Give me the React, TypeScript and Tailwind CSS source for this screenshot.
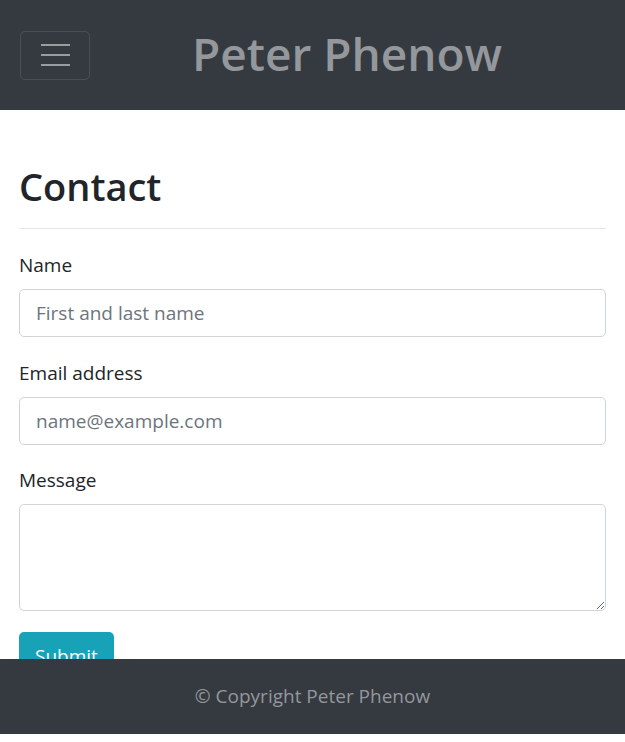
const FONT = "font-['Open_Sans',_'Noto_Sans',_sans-serif]";

function Field({
  label,
  placeholder,
  type = "text",
  className = "",
}: {
  label: string;
  placeholder: string;
  type?: string;
  className?: string;
}) {
  return (
    <div className={className}>
      <label className="block text-[19px] leading-[30px] mb-[9px]">{label}</label>
      <input
        type={type}
        placeholder={placeholder}
        className="block w-full h-12 px-4 text-[19px] border border-[#ced4da] rounded-[5px] bg-white placeholder:text-[#6c757d] outline-none"
      />
    </div>
  );
}

export default function App() {
  return (
    <div className={`${FONT} text-[#212529] bg-white min-h-[742px]`}>
      {/* Navbar */}
      <header className="h-[110px] bg-[#343a40] flex items-center">
        <button
          className="ml-5 w-[70px] h-[49px] flex flex-col items-center justify-center gap-2 border border-white/10 rounded-[5px]"
          aria-label="Toggle navigation"
        >
          <span className="block w-[29px] h-[2px] bg-white/50" />
          <span className="block w-[29px] h-[2px] bg-white/50" />
          <span className="block w-[29px] h-[2px] bg-white/50" />
        </button>
        <span className="ml-[102px] text-[46px] leading-[56px] font-semibold text-[#94979b] -mt-1">
          Peter Phenow
        </span>
      </header>

      {/* Contact form */}
      <main className="px-[19px] pb-[80px]">
        <h1 className="mt-[52px] text-[38px] leading-[48px] font-semibold">Contact</h1>
        <hr className="mt-[18px] border-0 border-t border-[#e6e6e6]" />

        <form className="mt-[21px]" onSubmit={(e) => e.preventDefault()}>
          <Field label="Name" placeholder="First and last name" className="mb-[21px]" />
          <Field
            label="Email address"
            type="email"
            placeholder="name@example.com"
            className="mb-[20px]"
          />
          <div className="mb-[21px]">
            <label className="block text-[19px] leading-[30px] mb-[9px]">Message</label>
            <textarea className="block w-full h-[107px] px-4 py-2 text-[19px] border border-[#ced4da] rounded-[5px] outline-none" />
          </div>
          <button
            type="submit"
            className="h-12 px-4 text-[19px] text-white bg-[#17a2b8] rounded-[5px]"
          >
            Submit
          </button>
        </form>
      </main>

      {/* Footer overlays the bottom of the page */}
      <footer className="fixed left-0 right-0 top-[659px] h-[75px] bg-[#343a40] flex items-center justify-center">
        <p className="text-[19px] text-[#94979b]">© Copyright Peter Phenow</p>
      </footer>
    </div>
  );
}
